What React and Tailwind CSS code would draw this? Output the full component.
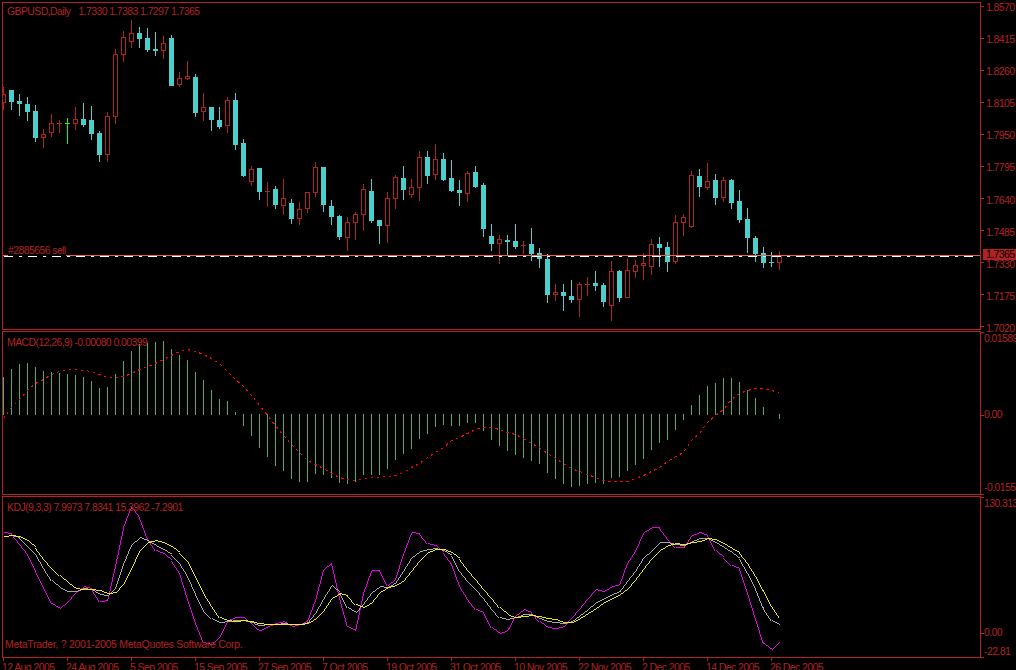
const RED = '#b22222';
const CYAN = '#48d1cc';
const FONT = "font-['Liberation_Sans',Arial,sans-serif]";

// [high, bodyTop, bodyBottom, low, kind] 0 = hollow red, 1 = turquoise, 2 = lime doji
const candles = [
  [87,94,103,110,0],[90,90,102,110,1],[94,101,104,116,1],[97,104,112,121,1],[105,111,138,142,1],[129,134,138,148,0],
  [114,123,133,137,0],[120,123,123,133,0],[118,123,123,144,2],[107,119,124,130,0],[103,119,125,127,1],[106,120,134,140,1],
  [131,133,155,162,1],[112,116,155,162,0],[49,54,117,124,0],[31,37,55,62,0],[20,33,42,48,0],[27,33,39,48,1],
  [28,38,50,52,1],[32,49,51,56,1],[36,43,51,59,0],[35,38,86,86,1],[72,78,85,87,0],[61,76,79,80,0],
  [74,77,113,117,1],[93,107,112,121,0],[107,107,120,131,1],[107,120,127,129,1],[97,100,126,133,0],[93,100,145,150,1],
  [139,143,176,177,1],[166,169,182,186,0],[168,168,192,200,1],[182,191,191,207,0],[186,189,205,209,1],[179,198,206,215,0],
  [199,203,219,224,1],[202,209,219,225,0],[192,192,209,213,0],[162,167,193,197,0],[167,167,205,212,1],[200,206,217,225,1],
  [215,216,237,240,1],[217,222,238,251,0],[212,214,223,240,0],[184,189,215,231,0],[179,191,221,223,1],[220,220,226,244,1],
  [192,198,226,243,0],[175,177,199,209,0],[166,178,190,200,1],[179,187,195,198,0],[151,157,188,201,0],[151,157,176,184,1],
  [144,159,175,180,0],[153,159,180,181,1],[160,178,191,192,1],[180,190,193,206,1],[171,173,194,202,0],[166,172,187,188,1],
  [183,185,229,237,1],[224,236,244,251,1],[235,239,244,264,0],[235,240,242,256,1],[224,241,247,249,1],[241,245,245,254,0],
  [228,244,254,261,1],[248,253,259,268,1],[254,259,295,303,1],[284,292,295,301,0],[284,292,296,311,1],[280,296,300,303,1],
  [282,284,300,317,0],[277,284,284,296,0],[271,283,286,291,1],[283,285,302,307,1],[261,271,306,321,0],[270,271,298,302,1],
  [259,270,298,298,0],[260,265,272,278,0],[253,263,266,280,0],[239,244,267,275,0],[237,244,248,267,1],[242,247,262,272,1],
  [215,222,262,264,0],[214,217,223,236,0],[171,175,227,228,0],[169,176,187,197,1],[163,181,188,190,0],[174,180,198,205,1],
  [177,180,198,202,0],[179,180,203,209,1],[190,201,220,223,1],[208,219,238,253,1],[236,238,254,262,1],[247,253,263,268,1],
  [252,262,263,267,1],[251,255,263,270,0],
];

// MACD histogram: pixel row of the far end of each bar (zero row = 414)
const hist = [377,369,364,363,367,371,372,373,374,375,377,381,388,387,374,361,351,344,343,342,341,349,355,360,372,380,390,399,401,412,
  425,435,447,456,465,470,478,481,481,473,474,477,482,483,481,474,474,474,468,459,453,448,438,433,426,424,425,425,422,422,430,439,445,450,454,457,460,463,472,478,483,486,485,483,482,483,477,476,470,464,458,449,442,439,429,
  419,405,395,386,383,378,378,382,390,398,407,null,418];

const signal = [418,407,399,390,383,379,374,371,369,369,370,371,374,377,377,376,373,369,366,363,359,355,351,349,351,354,358,363,371,379,386,395,405,415,425,435,444,452,460,464,468,473,477,
  479,480,478,477,477,476,475,472,467,463,457,452,447,440,437,433,429,427,427,429,432,434,438,443,447,453,458,463,468,471,474,477,480,481,481,481,478,475,471,467,461,456,
  452,440,433,422,415,409,399,393,390,388,388,390,392];

const magenta = [532,533,543,553,570,587,603,608,601,592,586,588,601,600,565,527,506,517,538,550,553,560,572,598,622,642,644,636,620,617,617,624,630,626,623,621,626,624,620,599,569,562,597,
  626,630,592,570,570,585,578,553,532,533,543,545,552,563,585,598,609,612,627,633,630,615,609,612,621,627,628,626,617,608,598,589,591,586,584,562,550,532,527,527,538,547,
  547,535,532,535,550,557,565,568,592,618,643,649,641];

const gray = [536,535,537,545,553,567,580,587,591,591,588,589,594,595,587,563,544,537,540,545,549,554,562,575,593,610,618,622,621,620,620,622,625,624,624,623,624,624,622,612,598,585,592,
  607,612,603,592,586,587,582,570,557,551,549,548,550,555,570,580,588,597,608,617,619,617,614,614,618,621,622,623,621,615,609,602,598,594,591,580,570,557,550,542,542,544,
  545,541,538,538,542,547,552,558,572,588,608,620,624];

const yellow = [536,535,536,540,547,558,567,575,582,588,589,589,590,593,592,583,568,550,542,540,542,546,552,560,575,592,605,617,620,621,620,621,623,624,624,624,624,624,623,618,610,598,593,
  595,604,607,602,592,587,585,580,570,560,552,549,549,552,558,569,578,588,597,607,614,617,616,615,616,618,619,622,622,618,613,608,602,598,594,588,579,568,558,550,545,543,
  544,542,541,538,539,543,548,552,562,575,590,605,617];

const pts = (arr) => arr.map((y, i) => `${3 + 8 * i + 0.5},${y + 0.5}`).join(' ');

const Tick = () => <div className="w-[3px] h-px bg-[#b22222] shrink-0" />;

const PriceRow = ({ v }) => (
  <div className="flex items-center gap-[2px] h-3 leading-3"><Tick /><span className="translate-y-px">{v}</span></div>
);

function Price() {
  return (
    <div className="flex">
      <div className="relative w-[979px] h-[328px] border border-[#b22222] shrink-0">
        <svg width="977" height="326" viewBox="3 3 977 326" shapeRendering="crispEdges" className="block">
          {candles.map(([hi, top, bot, lo, kind], i) => {
            const x = 3 + 8 * i;
            const col = kind === 0 ? RED : kind === 1 ? CYAN : '#00ff00';
            const h = Math.max(bot - top, 1);
            return (
              <g key={i}>
                <rect x={x} y={hi} width="1" height={lo - hi} fill={col} />
                <rect x={x - 2} y={top} width="5" height={h} fill={col} />
                {kind === 0 && h > 2 && <rect x={x - 1} y={top + 1} width="3" height={h - 2} fill="#000" />}
              </g>
            );
          })}
          <line x1="3" y1="255.5" x2="8" y2="255.5" stroke="#e9634f" />
          <line x1="66" y1="255.5" x2="980" y2="255.5" stroke="#e9634f" />
          <line x1="4" y1="256.5" x2="975" y2="256.5" stroke="#fff" strokeDasharray="9 6 3 6" />
        </svg>
        <div className="absolute left-[4px] top-[2px] text-[#b22222] whitespace-nowrap"><span className="mr-[8px]">GBPUSD,Daily</span>1.7330 1.7383 1.7297 1.7365</div>
        <div className="absolute left-[5px] top-[241px] text-[#b22222] whitespace-nowrap">#2885656 sell</div>
      </div>
      <div className="relative flex-1 self-start h-[333px] -mt-[2px] -mb-[3px] flex flex-col justify-between text-[#b22222] overflow-hidden">
        {['1.8570','1.8415','1.8260','1.8105','1.7950','1.7795','1.7640','1.7485','1.7330','1.7175','1.7020'].map((v) => <PriceRow key={v} v={v} />)}
        <div className="absolute left-[2px] top-[249px] right-0 h-[11px] pl-[3px] bg-[#b22222] text-black leading-[11px]">1.7365</div>
      </div>
    </div>
  );
}

function Macd() {
  return (
    <div className="flex">
      <div className="relative w-[979px] h-[164px] border border-[#b22222] shrink-0">
        <svg width="977" height="162" viewBox="3 332 977 162" shapeRendering="crispEdges" className="block">
          {hist.map((y, i) => {
            if (y === null) return null;
            const x = 3 + 8 * i;
            const t = Math.min(y, 414);
            const b = Math.max(y, 414);
            return <rect key={i} x={x} y={t} width="1" height={b - t + 1} fill="#3cb371" />;
          })}
          <polyline points={pts(signal)} fill="none" stroke="#ff0000" strokeDasharray="2.5 3.5" />
        </svg>
        <div className="absolute left-[4px] top-[4px] text-[#b22222] whitespace-nowrap">MACD(12,26,9) -0.00080 0.00399</div>
      </div>
      <div className="flex-1 flex flex-col text-[#b22222] overflow-hidden whitespace-nowrap">
        <div className="h-[77px] flex items-start"><div className="w-[3px] h-px bg-[#b22222] mt-px shrink-0" /><span className="mt-px leading-3">0.01589</span></div>
        <div className="h-[14px] flex items-center"><Tick /><span className="leading-3 -translate-y-px">0.00</span></div>
        <div className="flex-1 flex items-end"><Tick /><span className="mb-[2px] leading-3">-0.01555</span></div>
      </div>
    </div>
  );
}

function Kdj() {
  return (
    <div className="flex">
      <div className="relative w-[979px] h-[162px] border border-[#b22222] shrink-0">
        <svg width="977" height="160" viewBox="3 497 977 160" shapeRendering="crispEdges" className="block">
          <polyline points={pts(magenta)} fill="none" stroke="#ff00ff" strokeWidth="0.9" />
          <polyline points={pts(gray)} fill="none" stroke="#b8b8b8" strokeWidth="0.9" />
          <polyline points={pts(yellow)} fill="none" stroke="#ffff00" strokeWidth="0.9" />
        </svg>
        <div className="absolute left-[4px] top-[4px] text-[#b22222] whitespace-nowrap">KDJ(9,3,3) 7.9973 7.8341 15.3962 -7.2901</div>
        <div className="absolute left-[2px] top-[141px] text-[#b22222] whitespace-nowrap tracking-[-0.28px]">MetaTrader, ? 2001-2005 MetaQuotes Software Corp.</div>
      </div>
      <div className="flex-1 flex flex-col text-[#b22222] overflow-hidden whitespace-nowrap">
        <div className="h-[129px] flex items-start"><div className="w-[3px] h-px bg-[#b22222] mt-px shrink-0" /><span className="mt-[1px] leading-3">130.313</span></div>
        <div className="h-[16px] flex items-center"><Tick /><span className="leading-3 -translate-y-px">0.00</span></div>
        <div className="flex-1 flex items-end"><Tick /><span className="leading-3 mb-px">-22.81</span></div>
      </div>
    </div>
  );
}

const dates = ['12 Aug 2005','24 Aug 2005','5 Sep 2005','15 Sep 2005','27 Sep 2005','7 Oct 2005','19 Oct 2005','31 Oct 2005','10 Nov 2005','22 Nov 2005','2 Dec 2005','14 Dec 2005','26 Dec 2005'];

function Dates() {
  return (
    <div className="flex pl-px text-[#b22222]">
      {dates.map((d) => (
        <div key={d} className="w-16 shrink-0 whitespace-nowrap">
          <div className="w-px h-[3px] bg-[#b22222]" />
          <div className="leading-3 -ml-px">{d}</div>
        </div>
      ))}
    </div>
  );
}

export default function App() {
  return (
    <div className={`w-[1016px] h-[670px] bg-black overflow-hidden pl-[2px] pt-[2px] flex flex-col gap-px text-[10.5px] leading-3 tracking-[-0.6px] ${FONT}`}>
      <Price />
      <Macd />
      <Kdj />
      <div className="-mt-px"><Dates /></div>
    </div>
  );
}
